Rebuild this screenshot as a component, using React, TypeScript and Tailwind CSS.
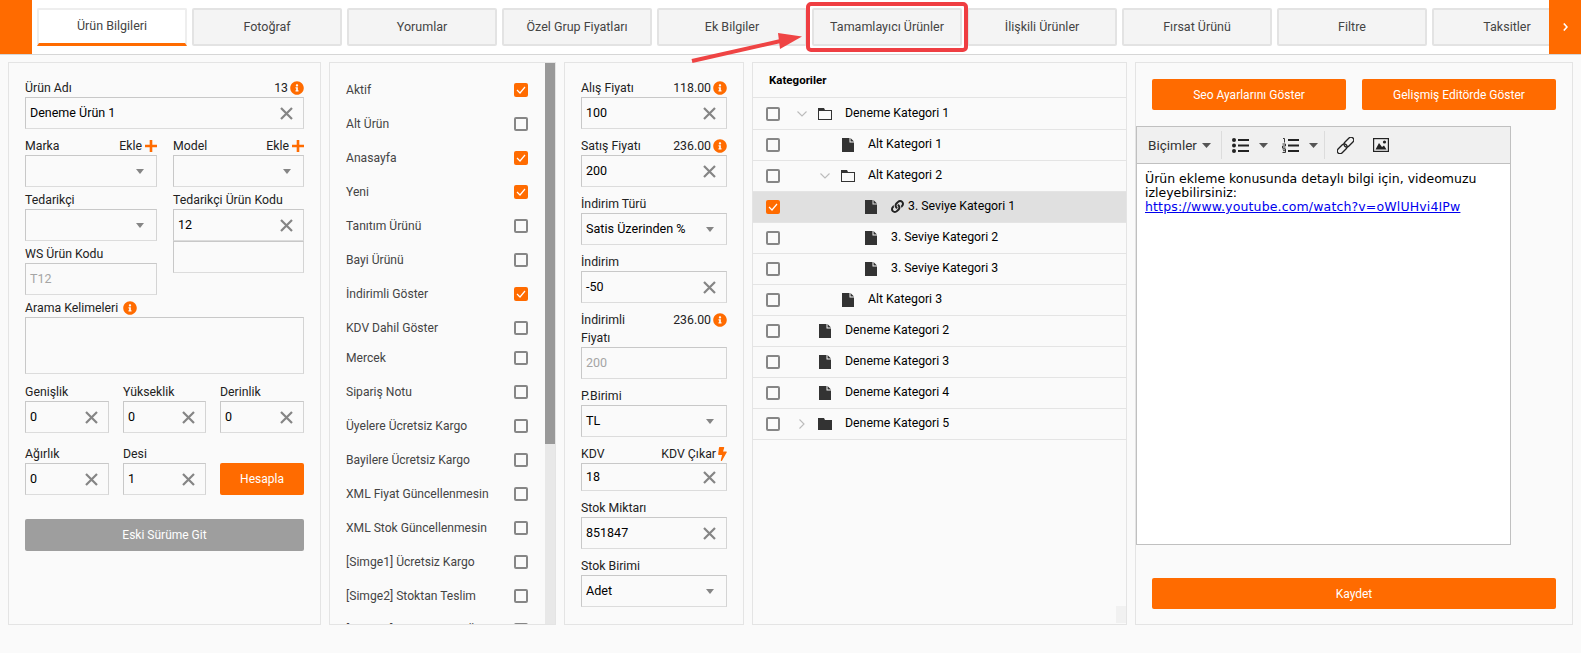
import React from "react";
import { FaInfoCircle, FaLink, FaBolt } from "react-icons/fa";

const Info = () => <FaInfoCircle className="text-[#ff6b00] text-[14px] shrink-0" />;

const Cross = () => (
  <svg width="13" height="13" viewBox="0 0 13 13" className="shrink-0">
    <path d="M1 1 L12 12 M12 1 L1 12" stroke="#858585" strokeWidth="2.2" />
  </svg>
);

const Caret = ({ color = "#858585", w = 8 }: { color?: string; w?: number }) => (
  <svg width={w} height="5" viewBox="0 0 9 5" preserveAspectRatio="none" className="shrink-0">
    <path d="M0 0 H9 L4.5 5 Z" fill={color} />
  </svg>
);

const Box = ({
  value = "",
  h = "h-[32px]",
  clear = false,
  select = false,
  disabled = false,
}: {
  value?: string;
  h?: string;
  clear?: boolean;
  select?: boolean;
  disabled?: boolean;
}) => (
  <div
    className={`${h} flex items-center justify-between pl-[4px] pr-[10px] border border-[#c8c8c8] border-b-[#dcdcdc] border-r-[#d4d4d4] ${
      disabled ? "text-[#a5a5a5]" : "text-black"
    }`}
  >
    <span className={select ? "text-[12.6px]" : "text-[12.5px]"}>{value}</span>
    {clear && <Cross />}
    {select && (
      <span className="pr-[2px]">
        <Caret />
      </span>
    )}
  </div>
);

const Label = ({ children, right }: { children: React.ReactNode; right?: React.ReactNode }) => (
  <div className="h-[18px] flex items-center justify-between text-[12.3px] text-[#222] leading-[18px]">
    <span>{children}</span>
    {right && <span className="flex items-center gap-[2px]">{right}</span>}
  </div>
);

const Add = () => (
  <>
    <span>Ekle</span>
    <svg width="12" height="12" viewBox="0 0 12 12" className="ml-[1px]">
      <path d="M6 0 V12 M0 6 H12" stroke="#ff6b00" strokeWidth="2.6" />
    </svg>
  </>
);

const Check = ({ on = false }: { on?: boolean }) =>
  on ? (
    <span className="w-[14px] h-[14px] rounded-[2px] bg-[#ff6b00] flex items-center justify-center shrink-0">
      <svg width="10" height="8" viewBox="0 0 10 8">
        <path d="M1 4 L4 7 L9 1" fill="none" stroke="#fff" strokeWidth="1.2" />
      </svg>
    </span>
  ) : (
    <span className="w-[14px] h-[14px] rounded-[2px] border-2 border-[#868686] shrink-0" />
  );

const tabs = [
  "Ürün Bilgileri",
  "Fotoğraf",
  "Yorumlar",
  "Özel Grup Fiyatları",
  "Ek Bilgiler",
  "Tamamlayıcı Ürünler",
  "İlişkili Ürünler",
  "Fırsat Ürünü",
  "Filtre",
  "Taksitler",
];

const flags: [string, boolean][] = [
  ["Aktif", true],
  ["Alt Ürün", false],
  ["Anasayfa", true],
  ["Yeni", true],
  ["Tanıtım Ürünü", false],
  ["Bayi Ürünü", false],
  ["İndirimli Göster", true],
  ["KDV Dahil Göster", false],
  ["Mercek", false],
  ["Sipariş Notu", false],
  ["Üyelere Ücretsiz Kargo", false],
  ["Bayilere Ücretsiz Kargo", false],
  ["XML Fiyat Güncellenmesin", false],
  ["XML Stok Güncellenmesin", false],
  ["[Simge1] Ücretsiz Kargo", false],
  ["[Simge2] Stoktan Teslim", false],
  ["[Simge3] Yeni Mevsim Ürün", false],
];

type Row = {
  text: string;
  level: 0 | 1 | 2;
  kind: "open" | "closed" | "file";
  on?: boolean;
  link?: boolean;
};

const rows: Row[] = [
  { text: "Deneme Kategori 1", level: 0, kind: "open" },
  { text: "Alt Kategori 1", level: 1, kind: "file" },
  { text: "Alt Kategori 2", level: 1, kind: "open" },
  { text: "3. Seviye Kategori 1", level: 2, kind: "file", on: true, link: true },
  { text: "3. Seviye Kategori 2", level: 2, kind: "file" },
  { text: "3. Seviye Kategori 3", level: 2, kind: "file" },
  { text: "Alt Kategori 3", level: 1, kind: "file" },
  { text: "Deneme Kategori 2", level: 0, kind: "file" },
  { text: "Deneme Kategori 3", level: 0, kind: "file" },
  { text: "Deneme Kategori 4", level: 0, kind: "file" },
  { text: "Deneme Kategori 5", level: 0, kind: "closed" },
];

const indent = ["pl-0", "pl-[23px]", "pl-[46px]"];

const FolderOpen = () => (
  <svg width="14" height="12" viewBox="0 0 14 12">
    <path fillRule="evenodd" d="M0 0 H6 L7 2 H14 V12 H0 Z M1 3 V11 H13 V3 Z" fill="#333" />
  </svg>
);
const FolderClosed = () => (
  <svg width="14" height="12" viewBox="0 0 14 12">
    <path d="M0 0 H6 L7 2 H14 V12 H0 Z" fill="#333" />
  </svg>
);
const FileIcon = () => (
  <svg width="12" height="14" viewBox="0 0 12 14">
    <path d="M0 0 H7.5 V4.5 H12 V14 H0 Z M8.5 0 L12 3.5 H8.5 Z" fill="#333" />
  </svg>
);

const TreeRow = ({ row, first }: { row: Row; first: boolean }) => (
  <div
    className={`${first ? "h-[32px]" : "h-[31px]"} flex items-center pl-[13px] border-b border-[#e4e4e4] ${
      row.on ? "bg-[#e0e0e0]" : ""
    }`}
  >
    <Check on={row.on} />
    <div className={`${indent[row.level]} flex items-center`}>
      <span className="w-[38px] h-[14px] flex items-center justify-center shrink-0 pl-[6px]">
        {row.kind === "open" && (
          <svg width="10" height="6" viewBox="0 0 10 6">
            <path d="M0.5 0.5 L5 5 L9.5 0.5" fill="none" stroke="#bbb" strokeWidth="1.1" />
          </svg>
        )}
        {row.kind === "closed" && (
          <svg width="6" height="10" viewBox="0 0 6 10">
            <path d="M0.5 0.5 L5 5 L0.5 9.5" fill="none" stroke="#bbb" strokeWidth="1.1" />
          </svg>
        )}
      </span>
      <span className="w-[14px] flex justify-center shrink-0">
        {row.kind === "open" && <FolderOpen />}
        {row.kind === "closed" && <FolderClosed />}
        {row.kind === "file" && <FileIcon />}
      </span>
      <span className="pl-[13px] pb-[1px] flex items-center gap-[4px] text-[12.3px] text-black whitespace-nowrap">
        {row.link && <FaLink className="text-[13px] text-[#222]" />}
        {row.text}
      </span>
    </div>
  </div>
);

const OrangeBtn = ({ children, className = "" }: { children: React.ReactNode; className?: string }) => (
  <button className={`${className} bg-[#ff6b00] text-white text-[12px] rounded-[2px] flex items-center justify-center`}>
    {children}
  </button>
);

export default function App() {
  return (
    <div className="w-[1581px] h-[653px] relative overflow-hidden bg-[#fafafa] font-['Roboto',sans-serif]">
      <div className="h-[55px] flex bg-white border-b border-[#d6d6d6]">
        <div className="w-[32px] h-[54px] bg-[#ff6b00] shrink-0" />
        <div className="flex-1 flex gap-[5px] pl-[5px] pt-[8px] overflow-hidden">
          {tabs.map((t, i) => (
            <div
              key={t}
              className={`w-[150px] h-[38px] shrink-0 flex items-center justify-center text-[12.5px] rounded-[2px] border-2 ${
                i === 0
                  ? "bg-white border-[#eee] border-b-[3px] border-b-[#ff6b00] text-[#444] rounded-b-none"
                  : "bg-[#f4f4f4] border-[#e3e3e3] text-[#444]"
              }`}
            >
              {t}
            </div>
          ))}
        </div>
        <div className="w-[32px] h-[54px] bg-[#ff6b00] shrink-0 flex items-center justify-center">
          <svg width="5" height="8" viewBox="0 0 5 8">
            <path d="M0.8 0.5 L4 4 L0.8 7.5" fill="none" stroke="#fff" strokeWidth="1.6" />
          </svg>
        </div>
      </div>

      <div className="flex pl-[8px] pt-[7px] h-[570px]">
        {/* Panel 1 */}
        <section className="w-[313px] h-[563px] shrink-0 border border-[#e4e4e4] p-[16px]">
          <Label
            right={
              <>
                <span>13</span>
                <Info />
              </>
            }
          >
            Ürün Adı
          </Label>
          <Box value="Deneme Ürün 1" clear />
          <div className="flex gap-[16px] mt-[8px]">
            <div className="w-[132px]">
              <Label right={<Add />}>Marka</Label>
              <Box select />
            </div>
            <div className="w-[131px]">
              <Label right={<Add />}>Model</Label>
              <Box select />
            </div>
          </div>
          <div className="flex gap-[16px] mt-[4px]">
            <div className="w-[132px]">
              <Label>Tedarikçi</Label>
              <Box select />
              <div className="mt-[4px]">
                <Label>WS Ürün Kodu</Label>
                <Box value="T12" disabled />
              </div>
            </div>
            <div className="w-[131px]">
              <Label>Tedarikçi Ürün Kodu</Label>
              <Box value="12" clear />
              <Box />
            </div>
          </div>
          <div className="mt-[4px]">
            <Label>
              <span className="flex items-center gap-[5px]">
                Arama Kelimeleri
                <Info />
              </span>
            </Label>
            <Box h="h-[57px]" />
          </div>
          <div className="grid grid-cols-[84px_83px_84px] gap-x-[14px] mt-[9px]">
            <div>
              <Label>Genişlik</Label>
              <Box value="0" clear />
            </div>
            <div>
              <Label>Yükseklik</Label>
              <Box value="0" clear />
            </div>
            <div>
              <Label>Derinlik</Label>
              <Box value="0" clear />
            </div>
          </div>
          <div className="grid grid-cols-[84px_83px_84px] gap-x-[14px] mt-[12px] items-end">
            <div>
              <Label>Ağırlık</Label>
              <Box value="0" clear />
            </div>
            <div>
              <Label>Desi</Label>
              <Box value="1" clear />
            </div>
            <OrangeBtn className="h-[32px]">Hesapla</OrangeBtn>
          </div>
          <button className="w-full h-[32px] mt-[24px] bg-[#9e9e9e] text-white text-[12px] rounded-[2px]">
            Eski Sürüme Git
          </button>
        </section>

        {/* Panel 2 */}
        <section className="w-[227px] h-[563px] shrink-0 ml-[8px] border border-[#e4e4e4] flex overflow-hidden">
          <div className="flex-1 overflow-hidden pl-[16px] pr-[17px] pt-[10px]">
            {flags.map(([t, on]) => (
              <div
                key={t}
                className={`h-[34px] flex items-center justify-between text-[12.1px] text-[#444] whitespace-nowrap ${
                  t === "Mercek" ? "-mt-[4px]" : ""
                }`}
              >
                <span>{t}</span>
                <Check on={on} />
              </div>
            ))}
          </div>
          <div className="w-[10px] bg-[#e8e8e8] shrink-0">
            <div className="h-[381px] bg-[#999]" />
          </div>
        </section>

        {/* Panel 3 */}
        <section className="w-[180px] h-[563px] shrink-0 ml-[8px] border border-[#e4e4e4] p-[16px]">
          <Label
            right={
              <>
                <span>118.00</span>
                <Info />
              </>
            }
          >
            Alış Fiyatı
          </Label>
          <Box value="100" clear />
          <div className="mt-[8px]">
            <Label
              right={
                <>
                  <span>236.00</span>
                  <Info />
                </>
              }
            >
              Satış Fiyatı
            </Label>
            <Box value="200" clear />
          </div>
          <div className="mt-[8px]">
            <Label>İndirim Türü</Label>
            <Box value="Satis Üzerinden %" select />
          </div>
          <div className="mt-[8px]">
            <Label>İndirim</Label>
            <Box value="-50" clear />
          </div>
          <div className="mt-[8px]">
            <div className="flex items-start justify-between text-[12.3px] text-[#222] leading-[18px] h-[36px]">
              <span className="w-[60px]">İndirimli Fiyatı</span>
              <span className="flex items-center gap-[2px]">
                <span>236.00</span>
                <Info />
              </span>
            </div>
            <Box value="200" disabled h="h-[32px]" />
          </div>
          <div className="mt-[8px]">
            <Label>P.Birimi</Label>
            <Box value="TL" select />
          </div>
          <div className="mt-[8px]">
            <Label
              right={
                <>
                  <span>KDV Çıkar</span>
                  <FaBolt className="text-[#ff6b00] w-[9px] h-[14px]" />
                </>
              }
            >
              KDV
            </Label>
            <Box value="18" clear h="h-[28px]" />
          </div>
          <div className="mt-[8px]">
            <Label>Stok Miktarı</Label>
            <Box value="851847" clear />
          </div>
          <div className="mt-[8px]">
            <Label>Stok Birimi</Label>
            <Box value="Adet" select />
          </div>
        </section>

        {/* Panel 4 */}
        <section className="w-[375px] h-[563px] shrink-0 ml-[8px] border border-[#e4e4e4] flex flex-col relative">
          <div className="h-[35px] flex items-center pl-[16px] pt-[1px] border-b border-[#e4e4e4] text-[11.5px] font-bold text-black shrink-0">
            Kategoriler
          </div>
          {rows.map((r, i) => (
            <TreeRow key={r.text} row={r} first={i === 0} />
          ))}
          <div className="absolute right-0 bottom-[1px] w-[10px] h-[17px] bg-[#f1f1f1]" />
        </section>

        {/* Panel 5 */}
        <section className="w-[438px] h-[563px] shrink-0 ml-[8px] border border-[#e4e4e4] flex flex-col">
          <div className="flex gap-[16px] pl-[16px] pt-[16px]">
            <OrangeBtn className="w-[194px] h-[31px]">Seo Ayarlarını Göster</OrangeBtn>
            <OrangeBtn className="w-[194px] h-[31px]">Gelişmiş Editörde Göster</OrangeBtn>
          </div>
          <div className="w-[375px] h-[419px] mt-[16px] border border-[#c0c0c0] flex flex-col bg-white">
            <div className="h-[37px] bg-[#f0f0f0] border-b border-[#c0c0c0] flex items-center shrink-0 text-[#333]">
              <div className="h-[28px] flex items-center gap-[5px] pl-[11px] pr-[10px] border-r border-[#dcdcdc] text-[13.5px]">
                Biçimler
                <Caret color="#555" w={9} />
              </div>
              <div className="h-[28px] flex items-center pl-[10px] pr-[6px] gap-[10px] border-r border-[#dcdcdc]">
                <svg width="17" height="15" viewBox="0 0 17 15">
                  <circle cx="2" cy="2" r="2" fill="#222" />
                  <circle cx="2" cy="7.5" r="2" fill="#222" />
                  <circle cx="2" cy="13" r="2" fill="#222" />
                  <path d="M6 2 H17 M6 7.5 H17 M6 13 H17" stroke="#222" strokeWidth="1.8" />
                </svg>
                <Caret color="#555" w={9} />
                <svg width="17" height="15" viewBox="0 0 17 15" className="ml-[4px]">
                  <path d="M1 0.5 H2.5 V4.5 M0.5 6 H3.5 V8 H0.5 V10 H3.5 M0.5 11 H3.5 V14.5 H0.5 M1 12.7 H3.5" fill="none" stroke="#222" strokeWidth="0.9" />
                  <path d="M6 2 H17 M6 7.5 H17 M6 13 H17" stroke="#222" strokeWidth="1.8" />
                </svg>
                <Caret color="#555" w={9} />
              </div>
              <div className="h-[28px] flex items-center pl-[12px] gap-[19px]">
                <svg width="17" height="17" viewBox="0 0 17 17" fill="none" stroke="#222" strokeWidth="1.3">
                  <g transform="rotate(-45 8.5 8.5)">
                    <rect x="-2" y="5.75" width="11.5" height="5.5" rx="2.75" />
                    <rect x="7.5" y="5.75" width="11.5" height="5.5" rx="2.75" />
                  </g>
                </svg>
                <svg width="16" height="14" viewBox="0 0 16 14">
                  <rect x="0.6" y="0.6" width="14.8" height="12.8" fill="none" stroke="#222" strokeWidth="1.2" />
                  <path d="M2.5 11.5 L6 5 L9 9 L11 7.5 L13.5 11.5 Z" fill="#222" />
                  <circle cx="11.5" cy="4" r="1.6" fill="#222" />
                </svg>
              </div>
            </div>
            <div className="px-[8px] pt-[8px] font-['DejaVu_Sans',sans-serif] text-[12.5px] leading-[14px] text-black">
              <p>Ürün ekleme konusunda detaylı bilgi için, videomuzu izleyebilirsiniz:</p>
              <a href="#" className="text-[#0000ee] underline tracking-[0.15px]">
                https://www.youtube.com/watch?v=oWlUHvi4IPw
              </a>
            </div>
          </div>
          <div className="pl-[16px] mt-[33px]">
            <OrangeBtn className="w-[404px] h-[31px]">Kaydet</OrangeBtn>
          </div>
        </section>
      </div>

      {/* Annotation overlay */}
      <div className="absolute left-[806px] top-[2px] w-[162px] h-[50px] border-[4px] border-[#ef3e42] rounded-[5px]" />
      <svg className="absolute left-[685px] top-[28px]" width="125" height="40" viewBox="0 0 125 40">
        <path d="M7 33 L100 12" stroke="#ef4444" strokeWidth="4" />
        <path d="M117 8.5 L93 5 L95 21 Z" fill="#ef4444" />
      </svg>
    </div>
  );
}
